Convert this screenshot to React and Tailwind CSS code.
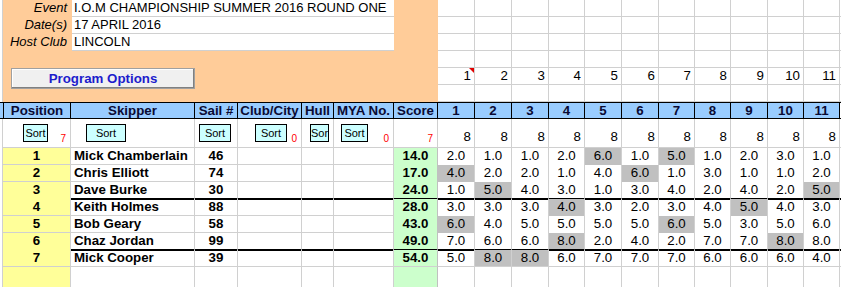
import { Fragment } from "react";

const GRID =
  "grid grid-cols-[3px_68px_124px_43px_64px_32px_60px_44px_37px_37px_37px_36px_37px_37px_36px_36px_37px_36px_36px_1fr]";

const races = [1, 2, 3, 4, 5, 6, 7, 8, 9, 10, 11];

const results = [
  { pos: 1, name: "Mick Chamberlain", sail: 46, score: "14.0", r: [2, 1, 1, 2, 6, 1, 5, 1, 2, 3, 1], drop: [5, 7] },
  { pos: 2, name: "Chris Elliott", sail: 74, score: "17.0", r: [4, 2, 2, 1, 4, 6, 1, 3, 1, 1, 2], drop: [1, 6] },
  { pos: 3, name: "Dave Burke", sail: 30, score: "24.0", r: [1, 5, 4, 3, 1, 3, 4, 2, 4, 2, 5], drop: [2, 11] },
  { pos: 4, name: "Keith Holmes", sail: 88, score: "28.0", r: [3, 3, 3, 4, 3, 2, 3, 4, 5, 4, 3], drop: [4, 9] },
  { pos: 5, name: "Bob Geary", sail: 58, score: "43.0", r: [6, 4, 5, 5, 5, 5, 6, 5, 3, 5, 6], drop: [1, 7] },
  { pos: 6, name: "Chaz Jordan", sail: 99, score: "49.0", r: [7, 6, 6, 8, 2, 4, 2, 7, 7, 8, 8], drop: [4, 10] },
  { pos: 7, name: "Mick Cooper", sail: 39, score: "54.0", r: [5, 8, 8, 6, 7, 7, 7, 6, 6, 6, 4], drop: [2, 3] },
];

const headers = ["Position", "Skipper", "Sail #", "Club/City", "Hull", "MYA No.", "Score"];

function SortBtn({ w, ml, label = "Sort" }) {
  return (
    <div
      className={`${w} ${ml} h-[18px] shrink-0 overflow-hidden whitespace-nowrap border border-black bg-[#ccffff] text-center text-[11px] leading-[16px]`}
    >
      {label}
    </div>
  );
}

export default function App() {
  return (
    <div className="h-[287px] w-[841px] overflow-hidden bg-white font-['Liberation_Sans',Arial,sans-serif] text-[13.3px] text-black">
      {/* event details + race numbers */}
      <div className={`${GRID} grid-rows-[repeat(6,17px)]`}>
        <div className="row-span-6 border-r border-[#d0d0d0]" />
        <div className="col-span-7 row-span-6 bg-[#ffcc99]">
          {[
            ["Event", "I.O.M CHAMPIONSHIP SUMMER 2016 ROUND ONE"],
            ["Date(s)", "17 APRIL 2016"],
            ["Host Club", "LINCOLN"],
          ].map(([label, value]) => (
            <div key={label} className="flex h-[17px] text-[13px]">
              <div className="w-[69px] pr-[5px] text-right italic leading-[16px]">{label}</div>
              <div className="w-[322px] border-b border-[#d0d0d0] bg-white pl-[2px] leading-[16px]">{value}</div>
            </div>
          ))}
          <div className="ml-[8px] mt-[17px] flex h-[21px] w-[184px] items-center justify-center border border-[#a0a0a0] bg-[#f0f0f0] text-[13.3px] font-bold text-[#1c1ccc] shadow-[inset_-1px_-1px_0_#808080,inset_1px_1px_0_#ffffff]">
            Program Options
          </div>
        </div>
        {[0, 1, 2, 3, 4, 5].map((row) => (
          <Fragment key={row}>
            {races.map((n) => (
              <div
                key={n}
                className="relative border-b border-r border-[#d0d0d0] pr-[3px] text-right leading-[16px]"
              >
                {row === 4 ? n : null}
                {row === 4 && n === 1 && (
                  <span className="absolute right-0 top-0 h-0 w-0 border-l-[5px] border-t-[5px] border-l-transparent border-t-[#e00000]" />
                )}
              </div>
            ))}
            <div className="border-b border-[#d0d0d0]" />
          </Fragment>
        ))}
      </div>

      {/* column headers */}
      <div className={`${GRID} h-[17px]`}>
        <div className="border-y border-black bg-[#99ccff]" />
        {headers.concat(races.map(String)).map((h, i) => (
          <div
            key={h + i}
            className={`border-y border-r border-black bg-[#99ccff] text-center font-bold leading-[15px] text-[#0a0a33] ${
              i === 0 ? "border-l" : ""
            }`}
          >
            {h}
          </div>
        ))}
        <div className="border-y border-black" />
      </div>

      {/* sort row */}
      <div className={`${GRID} h-[29px]`}>
        <div className="border-r border-[#d0d0d0]" />
        <div className="flex items-center border-b border-r border-[#d0d0d0]">
          <SortBtn w="w-[25px]" ml="ml-[20px]" />
          <span className="mb-[1px] ml-auto mr-[4px] self-end text-[10px] text-[#ff0000]">7</span>
        </div>
        <div className="flex items-center border-b border-r border-[#d0d0d0]">
          <SortBtn w="w-[40px]" ml="ml-[15px]" />
        </div>
        <div className="flex items-center border-b border-r border-[#d0d0d0]">
          <SortBtn w="w-[32px]" ml="ml-[4px]" />
        </div>
        <div className="flex items-center border-b border-r border-[#d0d0d0]">
          <SortBtn w="w-[32px]" ml="ml-[17px]" />
          <span className="mb-[1px] ml-auto mr-[4px] self-end text-[10px] text-[#ff0000]">0</span>
        </div>
        <div className="flex items-center border-b border-r border-[#d0d0d0]">
          <SortBtn w="w-[19px]" ml="ml-[8px]" label="Sor" />
        </div>
        <div className="flex items-center border-b border-r border-[#d0d0d0]">
          <SortBtn w="w-[27px]" ml="ml-[7px]" />
          <span className="mb-[1px] ml-auto mr-[4px] self-end text-[10px] text-[#ff0000]">0</span>
        </div>
        <div className="flex items-end justify-end border-b border-r border-[#d0d0d0] pb-[1px] pr-[4px]">
          <span className="text-[10px] text-[#ff0000]">7</span>
        </div>
        {races.map((n) => (
          <div key={n} className="flex items-end justify-end border-b border-r border-[#d0d0d0] pr-[3px]">
            8
          </div>
        ))}
        <div className="border-b border-[#d0d0d0]" />
      </div>

      {/* results */}
      {results.map((s, i) => {
        const thick = i === 2 || i === 5;
        const line = thick ? "border-b-2 border-b-black" : "border-b border-b-[#d0d0d0]";
        const raceLine = thick ? "border-b-2 border-b-black" : i === 6 ? "border-b border-b-[#d0d0d0]" : "";
        return (
          <div key={s.pos} className={`${GRID} h-[17px] leading-[16px]`}>
            <div className="border-r border-[#d0d0d0]" />
            <div className="border-b border-r border-[#d0d0d0] bg-[#ffff99] text-center font-bold">{s.pos}</div>
            <div className={`border-r border-r-[#d0d0d0] pl-[3px] font-bold ${line}`}>{s.name}</div>
            <div className={`border-r border-r-[#d0d0d0] text-center font-bold ${line}`}>{s.sail}</div>
            <div className={`border-r border-r-[#d0d0d0] ${line}`} />
            <div className={`border-r border-r-[#d0d0d0] ${line}`} />
            <div className={`border-r border-r-[#d0d0d0] ${line}`} />
            <div className={`border-r border-r-[#c0c0c0] bg-[#ccffcc] text-center font-bold ${raceLine}`}>{s.score}</div>
            {s.r.map((v, j) => (
              <div
                key={j}
                className={`border-r border-r-[#d0d0d0] text-center ${raceLine} ${
                  s.drop.includes(j + 1) ? "bg-[#c0c0c0]" : ""
                }`}
              >
                {v.toFixed(1)}
              </div>
            ))}
            <div className={raceLine} />
          </div>
        );
      })}

      {/* empty row */}
      <div className={`${GRID} h-[20px]`}>
        <div className="border-r border-[#d0d0d0]" />
        <div className="border-r border-[#d0d0d0] bg-[#ffff99]" />
        <div className="border-r border-[#d0d0d0]" />
        <div className="border-r border-[#d0d0d0]" />
        <div className="border-r border-[#d0d0d0]" />
        <div className="border-r border-[#d0d0d0]" />
        <div className="border-r border-[#d0d0d0]" />
        <div className="border-r border-[#c0c0c0] bg-[#ccffcc]" />
        {races.map((n) => (
          <div key={n} className="border-r border-[#d0d0d0]" />
        ))}
        <div />
      </div>
    </div>
  );
}
